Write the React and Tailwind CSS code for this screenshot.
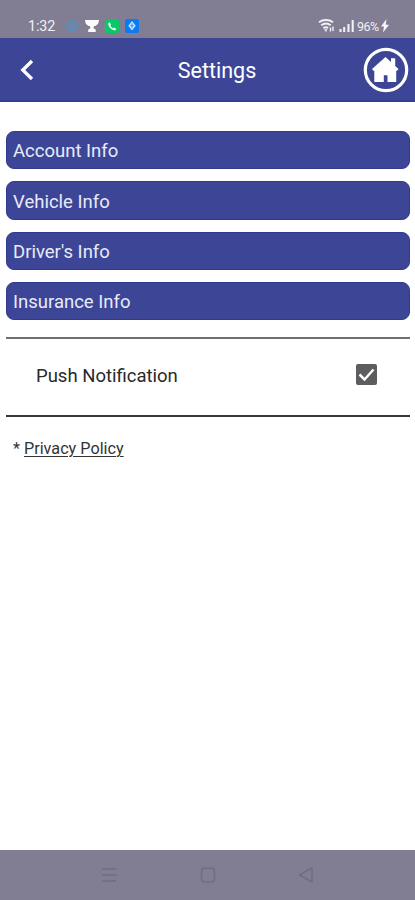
const items = ["Account Info", "Vehicle Info", "Driver's Info", "Insurance Info"];

function StatusBar() {
  return (
    <div className="flex h-[38px] shrink-0 items-end bg-[#817e93] pb-[4px] pl-[28px] text-[#f1f0f5]">
      <span className="relative top-px w-[37px] text-[14.3px] leading-[17px] tracking-[-0.1px]">1:32</span>
      <svg className="mb-[1px] h-[15px] w-[75px]" viewBox="65 18 75 15">
        <g fill="none" stroke="#5291c3" strokeWidth="1.6">
          <circle cx="71.8" cy="25.7" r="5" />
          <path d="M68 24h7M69 27.5h6M72 22v7" strokeWidth="1.2" />
        </g>
        <path d="M85 20h14c-.2 3.500-2 6-5.300 6.300v2.200l2 1v2.500h-7.500v-2.500l2-1v-2.200C87 26 85.200 23.500 85 20z" fill="#fbfafd" />
        <rect x="105" y="19" width="14" height="14" rx="3" fill="#08c967" />
        <path d="M109.300 22.200l1.700 2-.7 1.300c.6 1.300 1.500 2.200 2.700 2.800l1.300-.8 2 1.600c-.5 1.200-1.500 1.500-2.600 1.200-2.800-.9-4.800-3-5.400-5.700-.1-1 .2-1.900 1-2.400z" fill="#effff6" />
        <rect x="125" y="19" width="14" height="14" rx="2.500" fill="#087bf5" />
        <path d="M132 21l3.700 4.700-3.700 4.700-3.700-4.700z" fill="#c9e2ff" />
        <path d="M132 23.300v4.800M130.300 25.700h3.400" stroke="#3b8deb" strokeWidth="1" />
      </svg>
      <svg className="mb-[1px] ml-auto h-[15px] w-[38px]" viewBox="318 18 38 15" fill="none" stroke="#f1f0f5">
        <path d="M319 22.300c4-3 10-3 14 0M321.200 25.300c2.900-2.200 6.700-2.200 9.600 0M323.400 28.100c1.500-1.100 3.300-1.100 4.800-.2" strokeWidth="2" />
        <path d="M324 29.200h3.500L326 32z" fill="#f1f0f5" stroke="none" />
        <path d="M330.500 31.500v-4M333 26.500v4.500" strokeWidth="1.400" />
        <path d="M340.500 29v3M344.200 27v5M348.500 24v8M352.700 20v12" strokeWidth="2.100" />
      </svg>
      <span className="ml-[1px] w-[24px] text-[12.5px] leading-[15px] tracking-[-0.5px] whitespace-nowrap">96%</span>
      <svg className="mr-[25px] mb-[1px] h-[15px] w-[9px]" viewBox="381 18 9 15">
        <path d="M386.500 19l-5.500 7.500h3L383 32.500l6-7.700h-3.300z" fill="#f8f7fb" />
      </svg>
    </div>
  );
}

function Header() {
  return (
    <header className="flex h-[64px] shrink-0 items-center border-b-2 border-[#303f91] bg-[#3d4696] pr-[6px] pl-[20px] text-white">
      <svg className="mt-[2px] h-[22px] w-[44px]" viewBox="0 0 44 22" fill="none">
        <path d="M12 2L2.800 11l9.200 9" stroke="#fff" strokeWidth="3.300" />
      </svg>
      <h1 className="flex-1 pt-[4px] pl-[7px] text-center text-[21.500px] leading-[26px]">Settings</h1>
      <svg className="mt-[2px] h-[46px] w-[46px]" viewBox="0 0 46 46">
        <circle cx="23" cy="23" r="20.700" fill="none" stroke="#fff" strokeWidth="3.200" />
        <path d="M22.500 10l5.500 5V11.300h4.200v7.600l3.300 3-1.500 1.800h-.8v11.300h-8.700v-6.800h-3.700v6.800h-9.500V23.700h-.8L9 21.900z" fill="#fff" />
      </svg>
    </header>
  );
}

function NavBar() {
  return (
    <nav className="flex h-[50px] shrink-0 items-center justify-between bg-[#817e93] px-[101px]">
      <svg className="h-[16px] w-[16px]" viewBox="0 0 16 16" stroke="#706d82" strokeWidth="1.600">
        <path d="M1 2h14M1 8h15M1 14h14" />
      </svg>
      <svg className="h-[16px] w-[16px]" viewBox="0 0 16 16" fill="none" stroke="#706d82" strokeWidth="1.500">
        <rect x="1.500" y="1.200" width="13" height="13.600" rx="3" />
      </svg>
      <svg className="h-[16px] w-[16px]" viewBox="0 0 16 16" fill="none" stroke="#706d82" strokeWidth="1.500">
        <path d="M14 1L1.500 8 14 15z" strokeLinejoin="round" />
      </svg>
    </nav>
  );
}

export default function App() {
  return (
    <div className="flex h-[900px] w-[415px] flex-col overflow-hidden bg-white font-['Roboto',sans-serif]">
      <StatusBar />
      <Header />
      <main className="flex-1 px-[6px] pt-[29px]">
        <div className="flex flex-col gap-[12px]">
          {items.map((label) => (
            <button
              key={label}
              className="flex h-[38.300px] w-[403.500px] items-center rounded-[8px] border border-[#303b90] bg-[#3d4696] pt-[4px] pl-[6px] text-left text-[18.500px] text-[#e7ebfa]"
            >
              {label}
            </button>
          ))}
        </div>
        <div className="mt-[17px] flex h-[80px] w-[403.500px] items-center justify-between border-t-2 border-b-2 border-t-[#707070] border-b-[#383838] pr-[33px] pl-[30px]">
          <span className="text-[18.500px] text-[#292929]">Push Notification</span>
          <svg className="mb-[6px] h-[21px] w-[21px]" viewBox="0 0 21 21">
            <rect width="21" height="21" rx="2" fill="#5d5d60" />
            <path d="M3.500 10.500l5 5L17.500 5.500" fill="none" stroke="#fff" strokeWidth="2.500" />
          </svg>
        </div>
        <p className="flex gap-[4px] pt-[20px] pl-[7px] text-[16.200px] leading-[24px] text-[#333]">
          <span>*</span>
          <a className="underline decoration-1 underline-offset-2">Privacy Policy</a>
        </p>
      </main>
      <NavBar />
    </div>
  );
}
